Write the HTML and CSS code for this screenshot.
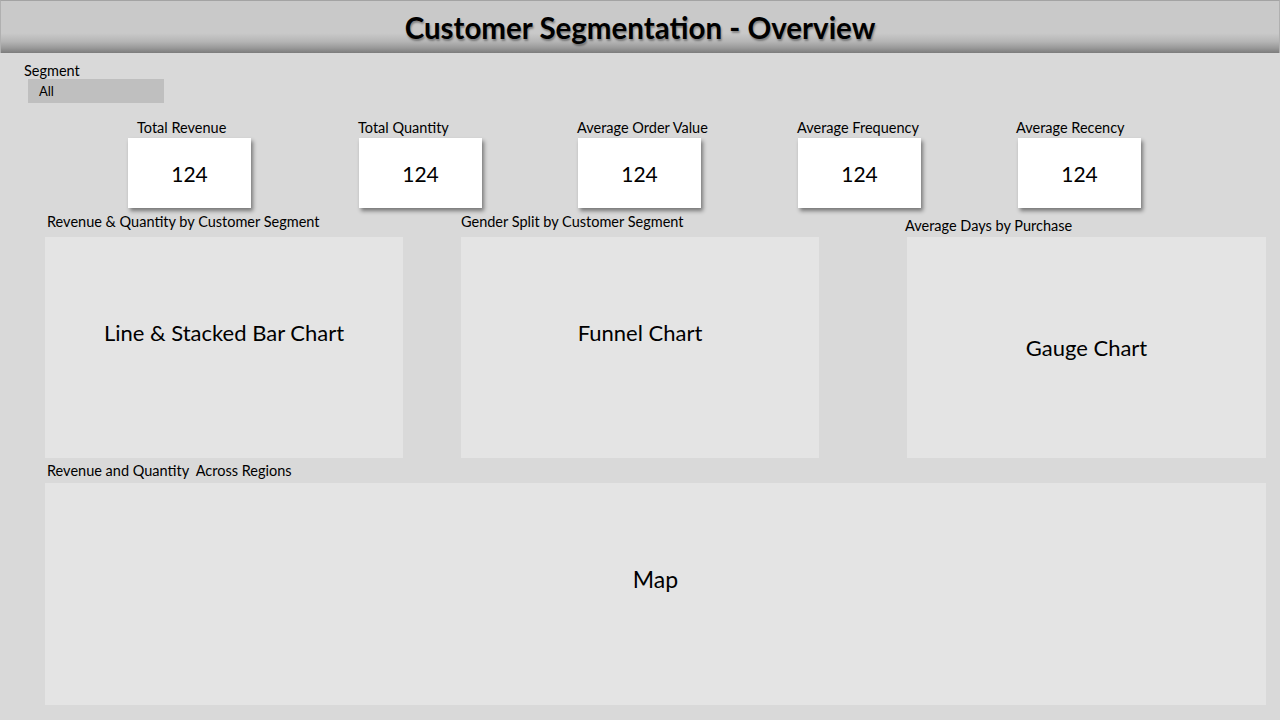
FILE: index.html
```html
<!DOCTYPE html>
<html lang="en">
<head>
    <meta charset="UTF-8">
    <meta name="viewport" content="width=device-width, initial-scale=1.0">
    <title>Customer Segmentation - Overview</title>
    <link rel="stylesheet" href="styles.css">
</head>
<body>
    <div class="header">Customer Segmentation - Overview</div>

    <div class="filter">
        <div class="filter-label">Segment</div>
        <div class="slicer">All</div>
    </div>

    <div class="kpis">
        <div class="kpi">
            <div class="kpi-label first">Total Revenue</div>
            <div class="card">124</div>
        </div>
        <div class="kpi">
            <div class="kpi-label">Total Quantity</div>
            <div class="card">124</div>
        </div>
        <div class="kpi">
            <div class="kpi-label">Average Order Value</div>
            <div class="card">124</div>
        </div>
        <div class="kpi">
            <div class="kpi-label">Average Frequency</div>
            <div class="card">124</div>
        </div>
        <div class="kpi">
            <div class="kpi-label last">Average Recency</div>
            <div class="card">124</div>
        </div>
    </div>

    <div class="charts">
        <div class="chart">
            <div class="chart-title first">Revenue &amp; Quantity by Customer Segment</div>
            <div class="chart-box raised">Line &amp; Stacked Bar Chart</div>
        </div>
        <div class="chart">
            <div class="chart-title">Gender Split by Customer Segment</div>
            <div class="chart-box raised">Funnel Chart</div>
        </div>
        <div class="chart gauge">
            <div class="chart-title low">Average Days by Purchase</div>
            <div class="chart-box">Gauge Chart</div>
        </div>
    </div>

    <div class="map">
        <div class="chart-title first map-title">Revenue and Quantity&nbsp; Across Regions</div>
        <div class="chart-box map-box raised">Map</div>
    </div>
</body>
</html>
```

FILE: styles.css
```css
body {
    margin: 0;
    background: #d9d9d9;
    font-family: Lato, "Open Sans", sans-serif;
    color: #000;
    height: 720px;
    overflow: hidden;
}

.header {
    height: 53px;
    box-sizing: border-box;
    border-top: 1px solid #a3a3a3;
    border-left: 1px solid #b0b0b0;
    border-right: 1px solid #b0b0b0;
    background: linear-gradient(#c9c9c9 0%, #c9c9c9 62%, #b5b5b5 78%, #9a9a9a 90%, #7c7c7c 100%);
    text-align: center;
    font-size: 29.5px;
    font-weight: bold;
    line-height: 53px;
    text-shadow: 1px 2px 2px rgba(0, 0, 0, 0.35);
}

.filter {
    padding-left: 24px;
    margin-top: 10px;
}
.filter-label {
    font-size: 14.5px;
    line-height: 16px;
}
.slicer {
    margin: 0 0 0 4px;
    width: 136px;
    height: 24px;
    box-sizing: border-box;
    padding-left: 11px;
    background: #bfbfbf;
    font-size: 13px;
    line-height: 24px;
}

.kpis {
    display: grid;
    grid-template-columns: 231px 219px 220px 220px 123px;
    padding-left: 128px;
    margin-top: 17px;
}
.kpi-label {
    font-size: 14.5px;
    line-height: 16px;
    margin-left: -1px;
    white-space: nowrap;
}
.kpi-label.first {
    margin-left: 9px;
}
.kpi-label.last {
    margin-left: -2px;
}
.card {
    margin-top: 2px;
    width: 123px;
    height: 70px;
    background: #fff;
    box-shadow: 2px 3px 4px rgba(0, 0, 0, 0.45);
    display: flex;
    align-items: center;
    justify-content: center;
    font-size: 21px;
}

.charts {
    display: grid;
    grid-template-columns: 358px 358px 389px;
    column-gap: 58px;
    padding-left: 45px;
    margin-top: 6px;
}
.chart.gauge {
    margin-left: 30px;
}
.chart-title {
    font-size: 14.5px;
    line-height: 16px;
    margin-bottom: 7px;
    white-space: nowrap;
}
.chart-title.first {
    padding-left: 2px;
}
.chart-title.low {
    margin: 4px 0 3px -2px;
}
.chart-box {
    height: 221px;
    background: #e4e4e4;
    display: flex;
    align-items: center;
    justify-content: center;
    font-size: 22px;
}
.chart-box.raised {
    box-sizing: border-box;
    padding-bottom: 30px;
}

.map {
    padding-left: 45px;
    width: 1221px;
}
.map-title {
    padding-top: 5px;
    margin-bottom: 4px;
}
.map-box {
    height: 222px;
    font-size: 23px;
}
```
